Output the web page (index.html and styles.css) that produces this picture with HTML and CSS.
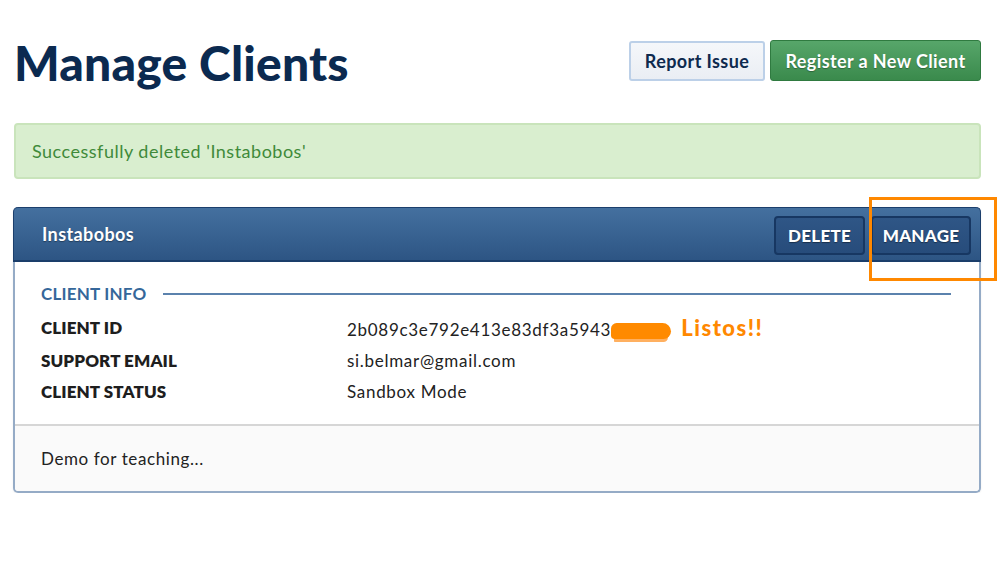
FILE: index.html
```html
<!DOCTYPE html>
<html>
<head>
<meta charset="utf-8">
<link rel="stylesheet" href="styles.css">
</head>
<body>
<div class="page">
  <header class="top">
    <h1 class="title">Manage Clients</h1>
    <div class="actions">
      <button class="btn btn-light">Report Issue</button>
      <button class="btn btn-green">Register a New Client</button>
    </div>
  </header>

  <div class="alert">Successfully deleted 'Instabobos'</div>

  <section class="panel">
    <div class="panel-head">
      <span class="panel-title">Instabobos</span>
      <div class="panel-actions">
        <button class="btn-dark">DELETE</button>
        <button class="btn-dark">MANAGE</button>
      </div>
      <span class="annot-box"></span>
    </div>
    <div class="panel-body">
      <div class="section-title"><span>CLIENT INFO</span><span class="rule"></span></div>
      <div class="info">
        <div class="label">CLIENT ID</div>
        <div class="value">2b089c3e792e413e83df3a5943<span class="scribble"></span><span class="listos">Listos!!</span></div>
        <div class="label">SUPPORT EMAIL</div>
        <div class="value">si.belmar@gmail.com</div>
        <div class="label">CLIENT STATUS</div>
        <div class="value">Sandbox Mode</div>
      </div>
    </div>
    <div class="panel-foot">Demo for teaching...</div>
  </section>
</div>
</body>
</html>
```

FILE: styles.css
```css
* { box-sizing: border-box; }
html, body { margin: 0; padding: 0; background: #fff; }
body { font-family: Lato, "Open Sans", sans-serif; color: #222; }

.page { margin: 0 25px 0 13px; padding-top: 40px; }

.top { display: flex; justify-content: space-between; align-items: flex-start; }
.title {
  margin: -3px 0 0; padding-left: 1px;
  font-size: 48px; font-weight: 900; line-height: 52px;
  color: #0b2a50; letter-spacing: 0.2px;
}
.actions { display: flex; gap: 5px; }
.btn {
  font-family: Lato, sans-serif; font-weight: 700; font-size: 18px;
  letter-spacing: 0.4px;
  height: 41px; border-radius: 3px; cursor: pointer; padding: 0;
}
.btn-light {
  width: 136px; margin-top: 1px; height: 40px;
  background: linear-gradient(#f5f7fa, #eaeef4);
  border: 2px solid #bcd0e8; color: #0e2a4e;
}
.btn-green {
  width: 211px;
  background: linear-gradient(#57a66a, #3a8a4c);
  border: 1px solid #2f7a40; color: #fff;
  text-shadow: 0 1px 1px rgba(0,0,0,0.3);
}

.alert {
  margin: 34px 0 0 1px; height: 56px;
  background: #d9eecf; border: 2px solid #c9e4bb; border-radius: 4px;
  color: #3f8a3a; font-size: 18px; letter-spacing: 0.5px; padding: 0 0 0 16px;
  display: flex; align-items: center;
}

.panel {
  margin-top: 28px;
  border: 2px solid #95abc6; border-top: none; border-radius: 5px;
  box-shadow: 0 1px 2px rgba(0,0,0,0.08);
}
.panel-head {
  position: relative;
  height: 55px; margin: 0 -2px;
  background: linear-gradient(#44709f, #2d5584);
  border: 1px solid #1c3f6c; border-bottom: 2px solid #1a3d6a;
  border-radius: 5px 5px 0 0;
  display: flex; align-items: center; justify-content: space-between;
  padding: 0 9px 0 28px;
}
.panel-title {
  color: #fff; font-weight: 700; font-size: 18px; letter-spacing: 0.4px;
  text-shadow: 0 1px 1px rgba(0,0,0,0.35);
  margin-top: -1px;
}
.panel-actions { display: flex; gap: 6px; margin-top: 3px; }
.btn-dark {
  font-family: Lato, sans-serif; font-weight: 900; font-size: 17px;
  color: #fff; height: 39px; padding: 0;
  background: linear-gradient(#2f5686, #274c7b);
  border: 2px solid #173762; border-radius: 4px;
  letter-spacing: 0.3px;
  text-shadow: 0 1px 1px rgba(0,0,0,0.4);
}
.btn-dark:first-child { width: 91px; }
.btn-dark:last-child { width: 100px; }
.annot-box {
  position: absolute; left: 855px; top: -11px;
  width: 128px; height: 84px;
  border: 3px solid #ff8800;
}

.panel-body { padding: 21px 28px 21px 26px; }
.section-title {
  display: flex; align-items: center; gap: 17px;
  color: #35679a; font-weight: 700; font-size: 17px;
  letter-spacing: 0.2px; line-height: 22px;
}
.rule { flex: 1; height: 2px; background: #5b82ad; }
.info {
  display: grid; grid-template-columns: 306px 1fr;
  row-gap: 9px; margin-top: 12px; line-height: 22px;
}
.label { font-weight: 800; font-size: 17px; color: #1e1e1e; letter-spacing: 0.1px; }
.value { color: #222; font-size: 17px; letter-spacing: 0.7px; }
.scribble {
  display: inline-block; width: 60px; height: 16px; vertical-align: -3px;
  background: #ff8a00; border-radius: 6px 9px 8px 4px;
  box-shadow: 0 6px 0 -3px #ffb060;
}
.listos {
  color: #ff8800; font-weight: 900; font-size: 22px; letter-spacing: 1.5px; margin-left: 10px;
}

.panel-foot {
  border-top: 2px solid #d6d6d6; background: #fafafa;
  height: 67px; padding: 0 26px; border-radius: 0 0 4px 4px;
  display: flex; align-items: center; font-size: 17px; letter-spacing: 0.6px; color: #222;
}
```
